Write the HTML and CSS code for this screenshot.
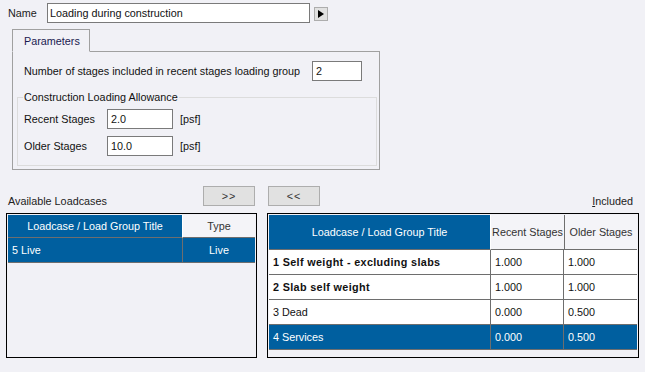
FILE: index.html
```html
<!DOCTYPE html>
<html lang="en">
<head>
  <meta charset="UTF-8" />
  <title>Loading during construction</title>
  <link rel="stylesheet" href="styles.css">
</head>
<body>
  <div class="name-row">
    <label class="name-label" for="nameInput">Name</label>
    <input type="text" id="nameInput" class="name-input" value="Loading during construction" />
    <button class="arrow-btn" aria-label="More">
      <svg width="6" height="8" viewBox="0 0 6 8"><path d="M0 0 L6 4 L0 8 Z" fill="#000"/></svg>
    </button>
  </div>

  <div class="tab">Parameters</div>
  <div class="panel">
    <div class="stage-row">
      <span class="stage-label">Number of stages included in recent stages loading group</span>
      <input type="text" class="field field-small" value="2" />
    </div>

    <fieldset class="group">
      <legend>Construction Loading Allowance</legend>
      <div class="field-row">
        <span class="field-label">Recent Stages</span>
        <input type="text" class="field" value="2.0" />
        <span class="unit">[psf]</span>
      </div>
      <div class="field-row">
        <span class="field-label">Older Stages</span>
        <input type="text" class="field" value="10.0" />
        <span class="unit">[psf]</span>
      </div>
    </fieldset>
  </div>

  <div class="lists">
    <!-- Available -->
    <div class="list-col left-col">
      <div class="list-head">
        <span class="list-title">Available Loadcases</span>
        <button class="move-btn">&gt;&gt;</button>
      </div>
      <div class="grid-box">
        <table class="grid">
          <thead>
            <tr class="head-short">
              <th class="sel-head col-title-left">Loadcase / Load Group Title</th>
              <th class="plain-head">Type</th>
            </tr>
          </thead>
          <tbody>
            <tr class="selected">
              <td>5 Live</td>
              <td class="center">Live</td>
            </tr>
          </tbody>
        </table>
      </div>
    </div>

    <!-- Included -->
    <div class="list-col right-col">
      <div class="list-head">
        <button class="move-btn">&lt;&lt;</button>
        <span class="list-title included"><u>I</u>ncluded</span>
      </div>
      <div class="grid-box">
        <table class="grid">
          <thead>
            <tr class="head-tall">
              <th class="sel-head col-title-right">Loadcase / Load Group Title</th>
              <th class="plain-head col-num">Recent Stages</th>
              <th class="plain-head col-num">Older Stages</th>
            </tr>
          </thead>
          <tbody>
            <tr class="bold">
              <td>1 Self weight - excluding slabs</td>
              <td>1.000</td>
              <td>1.000</td>
            </tr>
            <tr class="bold">
              <td>2 Slab self weight</td>
              <td>1.000</td>
              <td>1.000</td>
            </tr>
            <tr>
              <td>3 Dead</td>
              <td>0.000</td>
              <td>0.500</td>
            </tr>
            <tr class="selected">
              <td>4 Services</td>
              <td>0.000</td>
              <td>0.500</td>
            </tr>
          </tbody>
        </table>
      </div>
    </div>
  </div>
</body>
</html>
```

FILE: styles.css
```css
body {
  font-family: 'Liberation Sans', Arial, sans-serif;
  font-size: 10.8px;
  margin: 0;
  background: #f1f1f6;
  color: #111;
  width: 645px;
  height: 372px;
  overflow: hidden;
}

input, button {
  font-family: inherit;
  font-size: 10.8px;
  color: #111;
}

/* Name row */
.name-row {
  display: flex;
  align-items: center;
  padding: 3px 0 0 8px;
  height: 20px;
}
.name-label {
  width: 39px;
  color: #222;
}
.name-input {
  width: 263px;
  height: 20px;
  box-sizing: border-box;
  border: 1px solid #7a7a7a;
  background: #fff;
  padding: 0 2px;
  font-size: 10.8px;
}
.arrow-btn {
  width: 14px;
  height: 14px;
  margin: 2px 0 0 4px;
  padding: 0;
  box-sizing: border-box;
  border: 1px solid #adadad;
  background: #e1e1e1;
  display: flex;
  align-items: center;
  justify-content: center;
}

/* Tab + panel */
.tab {
  position: relative;
  z-index: 1;
  margin: 6px 0 -1px 12px;
  width: 78px;
  height: 23px;
  box-sizing: border-box;
  border: 1px solid #a0a0a0;
  border-bottom: 1px solid #f1f1f6;
  padding: 5px 0 0 11px;
  color: #1a1a50;
}
.panel {
  margin-left: 12px;
  width: 368px;
  height: 119px;
  box-sizing: border-box;
  border: 1px solid #a0a0a0;
  padding: 9px 0 0 11px;
}
.stage-row {
  display: flex;
  align-items: center;
}
.stage-label {
  width: 288px;
}
.field {
  width: 66px;
  height: 20px;
  box-sizing: border-box;
  border: 1px solid #7a7a7a;
  background: #fff;
  padding: 0 3px;
}
.field-small {
  width: 50px;
}

.group {
  margin: 10px 2px 0 -7px;
  padding: 6px 0 0 6px;
  height: 67px;
  border: 1px solid #dcdcdc;
}
.group legend {
  padding: 0 1px;
  margin-left: -1px;
}
.field-row {
  display: flex;
  align-items: center;
  margin-bottom: 7px;
}
.field-label {
  width: 83px;
}
.unit {
  margin-left: 7px;
}

/* Lists */
.lists {
  display: flex;
  gap: 10px;
  padding: 16px 0 0 6px;
}
.left-col {
  width: 251px;
}
.right-col {
  width: 372px;
}
.list-head {
  display: flex;
  justify-content: space-between;
  align-items: flex-start;
  height: 27px;
}
.list-title {
  margin-top: 9px;
  padding-left: 2px;
  color: #222;
}
.included {
  padding: 0 6px 0 0;
}
.move-btn {
  width: 52px;
  height: 20px;
  border: 1px solid #adadad;
  background: #e1e1e1;
  padding: 0;
  color: #333;
  letter-spacing: 1px;
}
.left-col .move-btn {
  margin-right: 2px;
}
.right-col .move-btn {
  margin-left: 1px;
}

.grid-box {
  height: 145px;
  box-sizing: border-box;
  border: 1px solid #000;
  padding: 1px;
}
.grid {
  width: 100%;
  border-collapse: separate;
  border-spacing: 0;
  table-layout: fixed;
}
.grid th {
  font-weight: normal;
  text-align: center;
  padding: 0;
}
.grid td {
  background: #fff;
  height: 24px;
  padding: 0 0 0 4px;
  border-right: 1px solid #6e6e6e;
  border-bottom: 1px solid #6e6e6e;
  white-space: nowrap;
}
.grid td:last-child {
  border-right: none;
}
.head-short th {
  height: 22px;
  border-bottom: 1px solid #6e6e6e;
}
.head-tall th {
  height: 34px;
  border-bottom: 1px solid #6e6e6e;
}
.sel-head {
  background: #005f9f;
  color: #fff;
  border-right: 1px solid #fff;
}
.plain-head {
  background: #f4f4f8;
  color: #333;
}
.col-num + .col-num {
  border-left: 1px solid #6e6e6e;
}
.col-title-left {
  width: 174px;
}
.col-title-right {
  width: 221px;
}
.grid td.center {
  text-align: center;
  padding: 0;
}
.grid tr.selected td {
  background: #005f9f;
  color: #fff;
}
.grid tr.bold td:first-child {
  font-weight: bold;
  letter-spacing: 0.35px;
}
```
